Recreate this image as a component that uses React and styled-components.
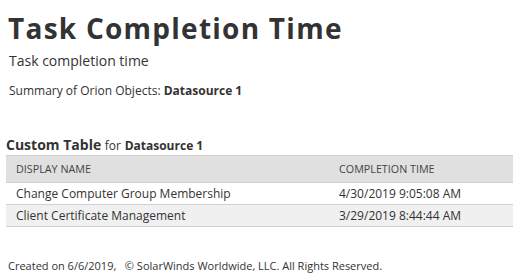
import React from "react";
import styled, { createGlobalStyle } from "styled-components";

const Global = createGlobalStyle`
  html, body { margin: 0; padding: 0; background: #fff; }
  body { font-family: "Open Sans", "Liberation Sans", sans-serif; color: #333; }
`;

const Page = styled.div`
  width: 513px;
  height: 274px;
  padding: 9px 0 0 6px;
  box-sizing: border-box;
  display: flex;
  flex-direction: column;
`;

const Title = styled.h1`
  margin: 0 0 0 2px;
  font-size: 28px;
  font-weight: 700;
  line-height: 38px;
  letter-spacing: 1.25px;
  color: #333;
`;

const Subtitle = styled.div`
  margin: 4px 0 0 3px;
  font-size: 14px;
  line-height: 20px;
  color: #333;
`;

const Summary = styled.div`
  margin: 12px 0 0 3px;
  font-size: 12px;
  line-height: 16px;
  color: #333;
  b { font-weight: 700; }
`;

const TableTitle = styled.div`
  margin-top: 37px;
  font-size: 14px;
  font-weight: 700;
  line-height: 18px;
  color: #333;
  span { font-size: 12px; font-weight: 400; }
  b { font-size: 12px; font-weight: 700; }
`;

const Table = styled.div`
  display: grid;
  grid-template-columns: 323px 1fr;
  border-top: 1px solid #d0d0d0;
`;

const Cell = styled.div`
  padding: 0 10px;
  color: #333;
  font-size: ${(p) => (p.$head ? "10.75px" : "12px")};
  line-height: ${(p) => (p.$head ? "26px" : "21px")};
  background: ${(p) => (p.$head ? "#e0e0e0" : p.$alt ? "#f0f0f0" : "#fff")};
  border-bottom: 1px solid #d0d0d0;
  ${(p) => p.$head && "text-transform: uppercase; color: #444;"}
`;

const Footer = styled.div`
  margin: auto 0 0 2px;
  font-size: 11px;
  line-height: 16px;
  color: #333;
`;

const rows = [
  ["Change Computer Group Membership", "4/30/2019 9:05:08 AM"],
  ["Client Certificate Management", "3/29/2019 8:44:44 AM"],
];

export default function App() {
  return (
    <Page>
      <Global />
      <Title>Task Completion Time</Title>
      <Subtitle>Task completion time</Subtitle>
      <Summary>
        Summary of Orion Objects: <b>Datasource 1</b>
      </Summary>
      <TableTitle>
        Custom Table <span>for</span> <b>Datasource 1</b>
      </TableTitle>
      <Table>
        <Cell $head>Display Name</Cell>
        <Cell $head>Completion Time</Cell>
        {rows.map(([name, time], i) => (
          <React.Fragment key={name}>
            <Cell $alt={i % 2 === 1}>{name}</Cell>
            <Cell $alt={i % 2 === 1}>{time}</Cell>
          </React.Fragment>
        ))}
      </Table>
      <Footer>Created on 6/6/2019, &nbsp; © SolarWinds Worldwide, LLC. All Rights Reserved.</Footer>
    </Page>
  );
}
